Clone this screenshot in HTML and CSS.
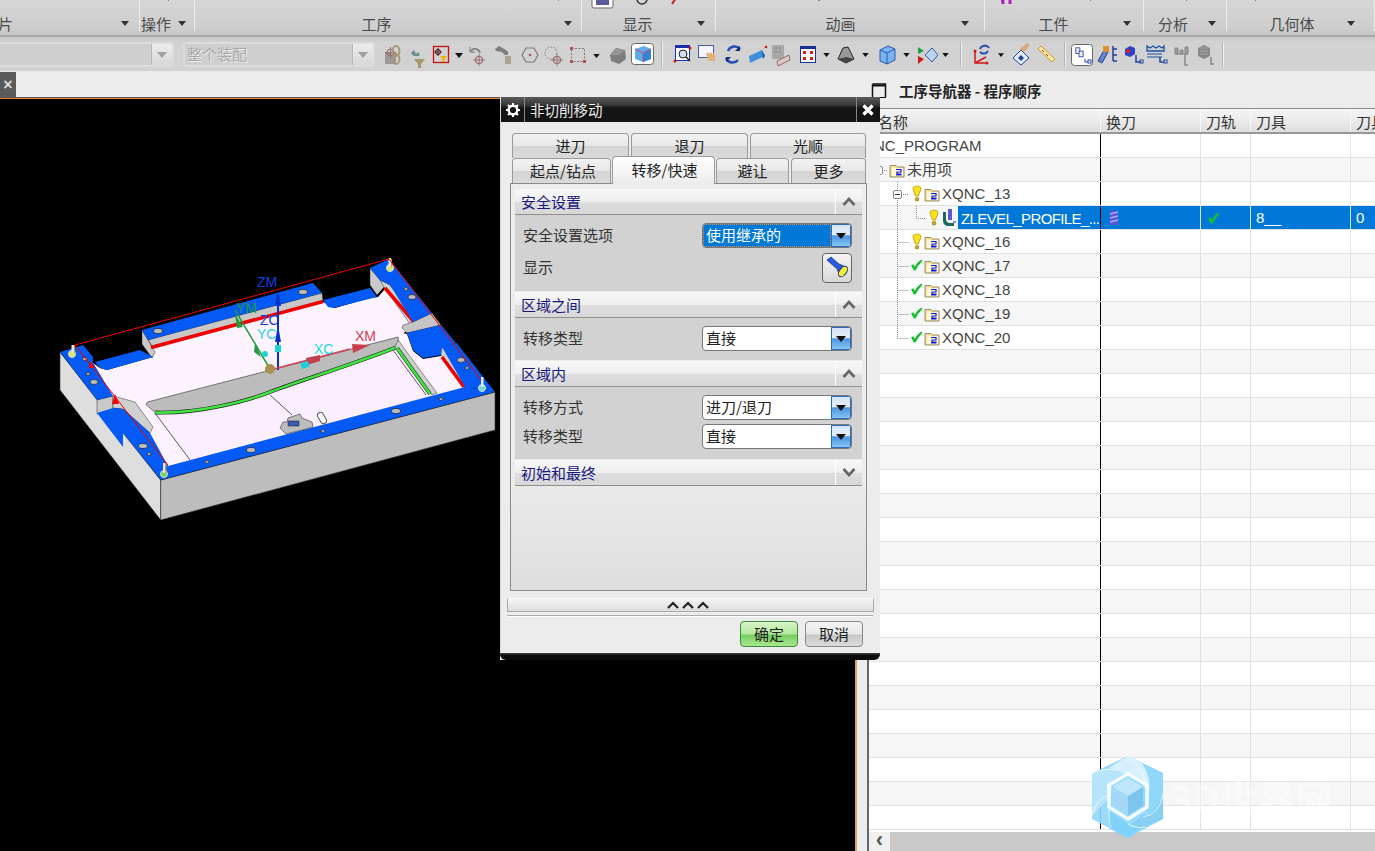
FILE: index.html
```html
<!DOCTYPE html>
<html lang="zh-CN">
<head>
<meta charset="utf-8">
<title>非切削移动</title>
<link rel="stylesheet" href="styles.css">
</head>
<body>
<svg class="defs" width="0" height="0">
  <symbol id="fold" viewBox="0 0 16 16">
    <path d="M1 3.500h6l1.500 1.500H15v10H1z" fill="#f7e39a" stroke="#8a8260" stroke-width=".9"/>
    <rect x="3" y="6" width="11" height="8" fill="#fdf8d4"/>
    <path d="M7 7.500h5v2.500H8v2h4.500M7 13h5.500" fill="none" stroke="#1616d8" stroke-width="1.200"/>
  </symbol>
  <symbol id="bulb" viewBox="0 0 10 17">
    <path d="M1 3C1 .5 9 .5 9 3c0 3-2 5-2.500 8h-3C3 8 1 6 1 3z" fill="#f9e21c" stroke="#b09a10" stroke-width=".8"/>
    <rect x="3.200" y="12.500" width="3.600" height="3.500" rx="1" fill="#caa616" stroke="#8a7a20" stroke-width=".5"/>
  </symbol>
  <symbol id="check" viewBox="0 0 13 12">
    <path d="M1 6.500l2.200-1.200 1.800 2.500C6.500 4.500 8.500 2 11.500 .8l1 1C9.800 4.500 7.500 7.800 5.600 11.500H4z" fill="#12c22e"/>
  </symbol>
  <symbol id="arrow" viewBox="0 0 8 5"><path d="M0 0h8L4 5z" fill="#111"/></symbol>
  <symbol id="tree" viewBox="0 0 16 16">
    <rect x="1" y="1" width="5" height="7" fill="#e8effa" stroke="#24409a"/>
    <rect x="5" y="5" width="5" height="7" fill="#e8effa" stroke="#24409a"/>
  </symbol>
  <symbol id="cross" viewBox="0 0 12 12">
    <circle cx="6" cy="6" r="3.500" fill="none" stroke="#9a6a70" stroke-width="1.200"/>
    <path d="M6 0v12M0 6h12" stroke="#9a6a70"/>
  </symbol>
</svg>

<div class="app">
  <header class="ribbon">
    <div class="rgroup g-a"><span class="rlabel rlabel-end">片</span><i class="rdrop"></i></div>
    <div class="rgroup g-b"><span class="rlabel">操作</span><i class="rdrop"></i></div>
    <div class="rgroup g-c"><span class="rlabel">工序</span><i class="rdrop"></i></div>
    <div class="rgroup g-d"><span class="rlabel">显示</span><i class="rdrop"></i></div>
    <div class="rgroup g-e"><span class="rlabel">动画</span><i class="rdrop"></i></div>
    <div class="rgroup g-f"><span class="rlabel">工件</span><i class="rdrop"></i></div>
    <div class="rgroup g-g"><span class="rlabel">分析</span><i class="rdrop"></i></div>
    <div class="rgroup g-h"><span class="rlabel">几何体</span><i class="rdrop"></i></div>
    <svg class="rcut" width="1375" height="10" viewBox="0 0 1375 10">
      <rect x="592" y="-8" width="21" height="16" rx="2" fill="#fff" stroke="#666"/>
      <rect x="596" y="-4" width="13" height="9" fill="#5a5a9a"/>
      <circle cx="642" cy="-1" r="5" fill="none" stroke="#333" stroke-width="1.500"/>
      <path d="M672 4l4-6" stroke="#d02020" stroke-width="2"/>
      <path d="M168 0h1M558 0h1M818 0h2" stroke="#333"/>
      <path d="M1003 0v4M1010 0v4" stroke="#b020c0" stroke-width="3"/>
      <path d="M1001 1h1M1090 0h1M1186 0h1M1255 0h1" stroke="#222"/>
    </svg>
  </header>

  <div class="toolbar">
    <div class="combo combo-a"><span class="combo-text"></span><i class="combo-btn"></i></div>
    <div class="combo combo-b"><span class="combo-text">整个装配</span><i class="combo-btn"></i></div>
    <div class="tools">
      <svg width="27" height="34"><rect x="5" y="16" width="11" height="11" fill="#9a9a9a"/><use href="#cross" x="5" y="10" width="11" height="11"/><ellipse cx="16" cy="14" rx="3.500" ry="5" fill="none" stroke="#a8987a" stroke-width="2"/><ellipse cx="16" cy="22" rx="3.500" ry="5" fill="none" stroke="#a8987a" stroke-width="2"/></svg>
      <svg width="23" height="34"><path d="M7 22h11l-4 5v4h-3v-4z" fill="#a8996a"/><path d="M4 16c2 4 6 4 9 2l-2-3-2 2-2-4z" fill="#6f8a92"/></svg>
      <svg width="22" height="34"><rect x="3.500" y="9.500" width="15" height="16" fill="none" stroke="#c81010" stroke-width="1.300"/><circle cx="8" cy="15" r="2.500" fill="none" stroke="#111"/><path d="M8 11v8M4.500 15h7" stroke="#6a0f0f"/><path d="M10 19h7l-2.500 3v3h-2v-3z" fill="#f2b400"/></svg>
      <svg width="15" height="34"><use href="#arrow" x="3" y="16" width="8" height="5"/></svg>
      <svg width="25" height="34"><path d="M4 14a5 5 0 0 1 9 2" fill="none" stroke="#777" stroke-width="1.500"/><path d="M3 10v5h5" fill="none" stroke="#777"/><use href="#cross" x="6" y="17" width="12" height="12"/></svg>
      <svg width="25" height="34"><path d="M3 12l4-3 7 4 2 2v3h-3l-3-3-6-1z" fill="#7d7d7d"/><rect x="13" y="19" width="6" height="8" fill="#a8a494"/></svg>
      <svg width="25" height="34"><path d="M9 11h8l4 7-4 7H9l-4-7z" fill="none" stroke="#7a7a7a" stroke-width="1.200"/><circle cx="13" cy="18" r="1.300" fill="#a05a5a"/></svg>
      <svg width="25" height="34"><circle cx="9" cy="16" r="6" fill="none" stroke="#777" stroke-dasharray="1.500 1.500"/><use href="#cross" x="9" y="17" width="12" height="12"/></svg>
      <svg width="23" height="34"><rect x="4.500" y="11.500" width="13" height="13" fill="none" stroke="#777" stroke-dasharray="2 1.500"/><path d="M3 10h3v3H3zM16 23h3v3h-3zM3 23h3v3H3z" fill="#b05050"/></svg>
      <svg width="17" height="34"><use href="#arrow" x="3" y="17" width="7" height="4"/></svg>
      <svg width="22" height="34"><path d="M3 18l6-7 9 2 1 9-7 5-8-3z" fill="#7d7d7d"/><path d="M9 11l9 2-6 5-9 0z" fill="#959595"/></svg>
      <svg class="tool-on" width="27" height="34"><rect x="2.500" y="6.500" width="22" height="21" rx="3" fill="#fff" stroke="#666"/><path d="M6 12l9-3 7 3v10l-8 3-8-3z" fill="#5aaef0"/><path d="M14 16l8-4v10l-8 3z" fill="#2e86d8"/><path d="M6 12l8 4 8-4M14 16v9" fill="none" stroke="#d04060"/></svg>
      <svg class="tsep" width="12" height="34"><path d="M6.500 5v25" stroke="#f0f0f0"/><path d="M5.500 5v25" stroke="#b4b4b4"/></svg>
      <svg width="27" height="34"><rect x="7.500" y="8.500" width="14" height="15" fill="#fff" stroke="#1a2fa8"/><rect x="7" y="8" width="15" height="3" fill="#1a2fa8"/><circle cx="15" cy="17" r="4" fill="#d0e0f0" stroke="#222"/><path d="M18 20l4 4" stroke="#222" stroke-width="1.500"/><circle cx="7" cy="24" r="1.500" fill="#d01010"/><circle cx="22" cy="11" r="1.500" fill="#d01010"/></svg>
      <svg width="24" height="34"><rect x="3.500" y="8.500" width="15" height="12" fill="#f4f4fa" stroke="#4a5aa8"/><path d="M11 17l2-2 1 2 2-2 1 2 2-1 1 3v5h-6z" fill="#e4b070"/></svg>
      <svg width="27" height="34"><path d="M9 14a7 7 0 0 1 12-2M19 23a7 7 0 0 1-12-2" fill="none" stroke="#2450b0" stroke-width="2.500"/><path d="M21 9v5h-5zM7 25v-5h5z" fill="#10307a"/></svg>
      <svg width="23" height="34"><path d="M3 19l13-6 3 6-15 7z" fill="#3f8fdc"/><path d="M16 13l3 6-2 3z" fill="#1f5fa8"/><circle cx="20" cy="10" r="1.300" fill="#d01010"/></svg>
      <svg width="27" height="34"><rect x="3" y="8" width="12" height="14" fill="#a8a8a8"/><path d="M6 11h2M10 11h2M6 15h2M10 15h2" stroke="#777"/><path d="M8 24l12-6 1 5-12 6z" fill="#d8c8c8" stroke="#966"/></svg>
      <svg width="23" height="34"><rect x="4.500" y="9.500" width="15" height="16" fill="#fff" stroke="#1a2f98"/><rect x="4" y="9" width="16" height="3" fill="#1a2f98"/><path d="M7 14h3v3H7zM14 14h3v3h-3zM7 20h3v3H7zM14 20h3v3h-3z" fill="#e01818"/></svg>
      <svg width="15" height="34"><use href="#arrow" x="4" y="16" width="7" height="4"/></svg>
      <svg width="24" height="34"><path d="M4 22l5-11 5-1 4 8 2 4-8 4z" fill="#999" stroke="#222"/><path d="M4 22l8-2 8 2-8 4z" fill="#444"/></svg>
      <svg width="16" height="34"><use href="#arrow" x="4" y="16" width="7" height="4"/></svg>
      <svg width="25" height="34"><path d="M6 13l8-4 7 3v11l-8 4-7-3z" fill="#7ab4f0" stroke="#2a5ab0"/><path d="M6 13l7 3 8-4M13 16v11" fill="none" stroke="#2a5ab0"/></svg>
      <svg width="15" height="34"><use href="#arrow" x="4" y="16" width="7" height="4"/></svg>
      <svg width="24" height="34"><path d="M11 18l7-7 6 7-6 7z" fill="#b8d4f0" stroke="#3a5a98"/><path d="M4 10l6 4-6 3z" fill="#20a040"/><path d="M4 19l6 3-6 5z" fill="#d01818"/></svg>
      <svg width="17" height="34"><use href="#arrow" x="4" y="16" width="7" height="4"/></svg>
      <svg class="tsep" width="12" height="34"><path d="M6.500 5v25" stroke="#f0f0f0"/><path d="M5.500 5v25" stroke="#b4b4b4"/></svg>
      <svg width="27" height="34"><path d="M8 14v12h12M8 26l11-6" fill="none" stroke="#d01818" stroke-width="1.500"/><circle cx="8" cy="14" r="1.500" fill="#d01818"/><circle cx="20" cy="26" r="1.500" fill="#d01818"/><path d="M13 12a5 5 0 0 1 9-1M21 14a5 5 0 0 1-8 1" fill="none" stroke="#2450b0" stroke-width="2"/></svg>
      <svg width="14" height="34"><use href="#arrow" x="4" y="16" width="6" height="4"/></svg>
      <svg width="26" height="34"><path d="M5 21l8-8 8 8-8 7z" fill="#e0ecff" stroke="#24409a"/><path d="M12 12l7-6 3 2-6 7z" fill="#d8a878"/><path d="M10 21l3-3 3 3-3 3z" fill="#24409a"/></svg>
      <svg width="25" height="34"><path d="M4 12l3-3 14 13-3 3z" fill="#f4e8a8" stroke="#c89a20"/><path d="M8 13l2 2M12 17l2 2" stroke="#d02020"/></svg>
      <svg class="tsep" width="10" height="34"><path d="M6.500 5v25" stroke="#f0f0f0"/><path d="M5.500 5v25" stroke="#b4b4b4"/></svg>
      <svg class="tool-on" width="26" height="34"><rect x="2.500" y="7.500" width="21" height="21" rx="3" fill="#fff" stroke="#666"/><use href="#tree" x="6" y="10" width="13" height="13"/><path d="M16 22v3h3" fill="none" stroke="#24409a"/><rect x="19" y="23" width="3" height="3" fill="none" stroke="#24409a"/></svg>
      <svg width="26" height="34"><path d="M3 24l6-11 4 2-6 11z" fill="#6a80c8" stroke="#24409a"/><rect x="8" y="9" width="6" height="6" fill="#e09030"/><path d="M18 9v15M18 12h4M18 18h4M18 24h4" fill="none" stroke="#24409a" stroke-width="1.500"/></svg>
      <svg width="23" height="34"><path d="M4 12l5-3 5 2v6l-5 3-5-2z" fill="#3040c8"/><circle cx="7" cy="14" r="2" fill="#e02020"/><path d="M15 18v7h5" fill="none" stroke="#24409a" stroke-width="1.500"/><rect x="19" y="23" width="3" height="3" fill="none" stroke="#24409a"/></svg>
      <svg width="27" height="34"><path d="M3 9l3 2 3-2 3 2 3-2 3 2 2-2v5H3z" fill="none" stroke="#1a50a8" stroke-width="1.300"/><path d="M3 17h15M3 20h15" stroke="#1a50a8"/><path d="M16 20v5h4" fill="none" stroke="#24409a" stroke-width="1.500"/><rect x="20" y="23" width="3" height="3" fill="none" stroke="#24409a"/></svg>
      <svg width="24" height="34"><path d="M4 11h3v6H4zM9 13h3v4H9zM14 10h3v7h-3zM4 17h13" fill="#989898" stroke="#888"/><path d="M14 17v11h3" fill="none" stroke="#888" stroke-width="1.500"/></svg>
      <svg width="24" height="34"><path d="M3 11l6-3 6 3v8l-6 3-6-3z" fill="#888"/><path d="M5 11h8M5 14h8M5 17h8" stroke="#a8a8a8"/><path d="M16 20v7h3" fill="none" stroke="#888" stroke-width="1.500"/></svg>
      <svg class="tsep" width="10" height="34"><path d="M4.500 5v25" stroke="#f0f0f0"/><path d="M3.500 5v25" stroke="#b4b4b4"/></svg>
    </div>
  </div>

  <div class="workspace">
    <section class="graphics">
      <div class="tabstrip"><span class="tabclose">×</span></div>
      <div class="viewport">
        <svg class="model" width="855" height="752" viewBox="0 99 855 752">
          <!-- side faces -->
          <path d="M60 352v38l100.700 130V480z" fill="#dedede" stroke="#333" stroke-width=".6"/>
          <path d="M160.700 480v40L495 430v-38z" fill="#bdbdbd" stroke="#333" stroke-width=".6"/>
          <!-- floor -->
          <path d="M93 363l7 5 7 2 46-13-1-10 171-45 12 6 35-10 8-1 7-8 30 35 18-3-30 12 4 1 6 17 10 8 18-3 2-8 22 40-297 79-18-33-15-31-22-6z" fill="#fdf3ff"/>
          <path d="M155 412.500C200 414 250 400 270 392S360 362 397 347L432 395 190 460z" fill="#fbeeff"/>
          <!-- back strip and walls -->
          <path d="M148 340l174-47 1 8-171 45z" fill="#c8c8c8" stroke="#333" stroke-width=".5"/>
          <path d="M142 330v14l10 14 3-6-7-12z" fill="#c9c9c9" stroke="#333" stroke-width=".5"/>
          <path d="M151 347.500l172-46" stroke="#f00000" stroke-width="3.500"/>
          <path d="M370 268v17l7 10 8-9-5-6z" fill="#c9c9c9" stroke="#333" stroke-width=".5"/>
          <path d="M380 280l10 5 26 34-6 5-26-37z" fill="#d2d2d2" stroke="#333" stroke-width=".5"/>
          <path d="M385 288l30 35" stroke="#f00000" stroke-width="3.500"/>
          <path d="M97 400l16-4v13l-16 5z" fill="#c9c9c9" stroke="#333" stroke-width=".5"/>
          <path d="M113 396l11 3 11 3 18 25-3 6-27-24-10-1z" fill="#d0d0d0" stroke="#333" stroke-width=".5"/>
          <path d="M413 322l19-9 9 12-34 8-5-5 1-3z" fill="#c4c4c4" stroke="#333" stroke-width=".5"/>
          <path d="M441 347v8l26 33 6-1-25-36z" fill="#d2d2d2" stroke="#333" stroke-width=".5"/>
          <path d="M442 357l22 30" stroke="#f00000" stroke-width="3.500"/>
          <!-- blue rim -->
          <path d="M60 352l23-7 10 12v6l20 33-16 4zM95 362l45-12 13 7-46 13-7-2zM142 330l171-47 9 10-174 47zM323 300l47-12 7 9-44 11-5-1zM370 268l19-9 43 54-19 9-23-37-10-5zM407 333l34-8 15 18-14 4-1 8-18 3-10-8zM442 347l15-4 38 49-30-5z" fill="#0559f4"/>
          <path d="M97 413l16-5 10 1 27 24 18 33 297-79 30 5-334 88-38-47v14z" fill="#0559f4"/>
          <path d="M60 352L97 400M123 433L160.700 480 495 392 389 259" fill="none" stroke="#222" stroke-width=".5"/>
          <!-- island -->
          <path d="M146 404.500l1.500-2.500 250.500-65 1 8-2 2C360 362 290 385 270 392S200 414 155 412.500z" fill="#bcbcbc" stroke="#333" stroke-width=".6"/>
          <path d="M155 412.500C200 414 250 400 270 392S360 362 397 347" fill="none" stroke="#222" stroke-width="3.800"/>
          <path d="M155 412.500C200 414 250 400 270 392S360 362 397 347" fill="none" stroke="#3fe63f" stroke-width="2.600"/>
          <path d="M398 340l39 53-5 2-37-48z" fill="#cfcfcf" stroke="#333" stroke-width=".5"/>
          <path d="M397 348l33 46" stroke="#222" stroke-width="3.800"/>
          <path d="M397 348l33 46" stroke="#3fe63f" stroke-width="2.600"/>
          <path d="M393 350l33 45M155 413l35 47M270 395l22 20" fill="none" stroke="#333" stroke-width=".8"/>
          <!-- small part -->
          <path d="M280 428l3-6 4 0 1-4 12-4 2 4 10 4 1 5-7 2-20 5z" fill="#bdbdbd" stroke="#333" stroke-width=".6"/>
          <rect x="288" y="421" width="11" height="5" fill="#3b5bb0" stroke="#222" stroke-width=".5"/>
          <rect x="319" y="412" width="6" height="12" rx="3" transform="rotate(-30 322 418)" fill="#fff" stroke="#555"/>
          <!-- holes -->
          <g fill="#bcbcbc" stroke="#222" stroke-width=".7">
            <ellipse cx="158" cy="331" rx="4.500" ry="2.500"/><ellipse cx="85" cy="359" rx="2.500" ry="1.700"/><ellipse cx="88" cy="374" rx="2" ry="1.400"/><ellipse cx="94" cy="382" rx="4" ry="2.500"/>
            <ellipse cx="143" cy="446" rx="4.500" ry="2.500"/><ellipse cx="149" cy="454" rx="2" ry="1.400"/><ellipse cx="251" cy="450" rx="4.500" ry="2.500"/><ellipse cx="207" cy="462" rx="2" ry="1.400"/>
            <ellipse cx="303" cy="292" rx="4.500" ry="2.500"/><ellipse cx="396" cy="411" rx="4.500" ry="2.500"/><ellipse cx="441" cy="399" rx="2" ry="1.400"/><ellipse cx="323" cy="431" rx="2" ry="1.400"/>
            <ellipse cx="406" cy="289" rx="2" ry="1.400"/><ellipse cx="412" cy="297" rx="4" ry="2.500"/><ellipse cx="461" cy="360" rx="4" ry="2.500"/><ellipse cx="467" cy="368" rx="2" ry="1.400"/>
          </g>
          <!-- pins -->
          <g>
            <circle cx="72" cy="354" r="3.500" fill="#d8e860" stroke="#ddd"/><rect x="71.500" y="345" width="2.500" height="8" fill="#e6e6e6"/><path d="M74.500 345v8" stroke="#e58a20"/>
            <circle cx="164" cy="474" r="3.500" fill="#70d860" stroke="#ddd"/><rect x="163" y="463" width="2.500" height="10" fill="#e6e6e6"/><path d="M166 463v10" stroke="#e58a20"/>
            <circle cx="390" cy="268" r="3.500" fill="#d8e860" stroke="#ddd"/><rect x="388.500" y="258" width="2.500" height="9" fill="#e6e6e6"/><path d="M391.500 259v8" stroke="#e58a20"/>
            <circle cx="482" cy="388" r="3.500" fill="#70d8c0" stroke="#ddd"/><rect x="481" y="377" width="2.500" height="10" fill="#e6e6e6"/>
          </g>
          <!-- red outline -->
          <path d="M75 345L389 259 481 380M75 345L168 465" fill="none" stroke="#f00000" stroke-width="1"/>
          <path d="M115 394l-3 10h7zM90 361l-1 7h6z" fill="#f00000"/>
          <!-- triad -->
          <path d="M278 295v75" stroke="#0a2fc8" stroke-width="2"/>
          <path d="M278 290l3 16h-6zM278 325l3 17h-6z" fill="#0a2fc8"/>
          <path d="M270 370l80-21" stroke="#d04050" stroke-width="1.500"/>
          <path d="M370 345l-18-1 1 9z" fill="#cc3b4a"/>
          <path d="M320 355l-14 3 1 7 13-4z" fill="#c04050"/>
          <rect x="301" y="362" width="8" height="6" transform="rotate(-15 305 365)" fill="#1ed0d8"/>
          <path d="M235 310l35 59" stroke="#1f9a3c" stroke-width="1.500"/>
          <path d="M235 314l8 13-6 1zM255 343l6 14-7-5z" fill="#1f9a3c"/>
          <circle cx="265" cy="354" r="3" fill="#1ed0d8"/>
          <rect x="275" y="345" width="6" height="7" fill="#1ed0d8"/>
          <circle cx="270" cy="369" r="5" fill="#a89050"/>
          <text class="ax ax-b" x="257" y="287">ZM</text>
          <text class="ax ax-b" x="260" y="325">ZC</text>
          <text class="ax ax-g" x="236" y="313">YM</text>
          <text class="ax ax-c" x="257" y="339">YC</text>
          <text class="ax ax-c" x="314" y="354">XC</text>
          <text class="ax ax-r" x="355" y="341">XM</text>
        </svg>
      </div>
    </section>

    <aside class="navigator">
      <div class="nav-title">
        <svg class="nav-win" width="16" height="16"><path d="M1.500 2h13v13M1.500 15V2" fill="none" stroke="#111" stroke-width="1.500"/><path d="M1 3.500h14" stroke="#111" stroke-width="2"/><path d="M1 15.500h14" stroke="#111"/></svg>
        <span>工序导航器 - 程序顺序</span>
      </div>
      <div class="grid-wrap">
        <div class="grid-head">
          <div class="hc hc-name"><span class="hc-name-text">名称</span></div>
          <div class="hc hc-2">换刀</div>
          <div class="hc hc-3">刀轨</div>
          <div class="hc hc-4">刀具</div>
          <div class="hc hc-5">刀具</div>
        </div>
        <div class="grid-body">
          <div class="row"><div class="c c1 l0">NC_PROGRAM</div><div class="c c2"></div><div class="c c3"></div><div class="c c4"></div><div class="c c5"></div></div>
          <div class="row"><div class="c c1 l1"><svg class="ic16" width="16" height="16"><use href="#fold"/></svg><span>未用项</span></div><div class="c c2"></div><div class="c c3"></div><div class="c c4"></div><div class="c c5"></div></div>
          <div class="row"><div class="c c1 l2"><svg class="st" width="15" height="18"><use href="#bulb" x="3" y="0" width="10" height="17"/></svg><svg class="ic16" width="16" height="16"><use href="#fold"/></svg><span>XQNC_13</span></div><div class="c c2"></div><div class="c c3"></div><div class="c c4"></div><div class="c c5"></div></div>
          <div class="row row-sel">
            <div class="c c1 l3">
              <svg class="st" width="14" height="18"><use href="#bulb" x="2" y="0" width="10" height="17"/></svg>
              <svg class="op" width="15" height="18"><path d="M2 3h3v7c0 3 2 4 5 4h3v3H8c-4 0-6-2-6-6z" fill="#1c6a5a"/><rect x="7" y="0" width="4" height="11" fill="#5a5ad8"/><path d="M12 13h3" stroke="#1616d8"/></svg>
              <span class="sel">ZLEVEL_PROFILE_...</span>
            </div>
            <div class="c c2"><svg class="tool" width="8" height="14"><rect width="8" height="14" fill="#5858d0"/><path d="M0 3l8-2M0 7l8-2M0 11l8-2" stroke="#b0a8f0" stroke-width="1.300"/></svg></div>
            <div class="c c3"><svg class="chk" width="13" height="12"><use href="#check"/></svg></div>
            <div class="c c4">8__</div>
            <div class="c c5">0</div>
          </div>
          <div class="row"><div class="c c1 l2"><svg class="st" width="15" height="18"><use href="#bulb" x="3" y="0" width="10" height="17"/></svg><svg class="ic16" width="16" height="16"><use href="#fold"/></svg><span>XQNC_16</span></div><div class="c c2"></div><div class="c c3"></div><div class="c c4"></div><div class="c c5"></div></div>
          <div class="row"><div class="c c1 l2"><svg class="st" width="15" height="18"><use href="#check" x="1" y="2" width="13" height="12"/></svg><svg class="ic16" width="16" height="16"><use href="#fold"/></svg><span>XQNC_17</span></div><div class="c c2"></div><div class="c c3"></div><div class="c c4"></div><div class="c c5"></div></div>
          <div class="row"><div class="c c1 l2"><svg class="st" width="15" height="18"><use href="#check" x="1" y="2" width="13" height="12"/></svg><svg class="ic16" width="16" height="16"><use href="#fold"/></svg><span>XQNC_18</span></div><div class="c c2"></div><div class="c c3"></div><div class="c c4"></div><div class="c c5"></div></div>
          <div class="row"><div class="c c1 l2"><svg class="st" width="15" height="18"><use href="#check" x="1" y="2" width="13" height="12"/></svg><svg class="ic16" width="16" height="16"><use href="#fold"/></svg><span>XQNC_19</span></div><div class="c c2"></div><div class="c c3"></div><div class="c c4"></div><div class="c c5"></div></div>
          <div class="row"><div class="c c1 l2"><svg class="st" width="15" height="18"><use href="#check" x="1" y="2" width="13" height="12"/></svg><svg class="ic16" width="16" height="16"><use href="#fold"/></svg><span>XQNC_20</span></div><div class="c c2"></div><div class="c c3"></div><div class="c c4"></div><div class="c c5"></div></div>
          <div class="row"><div class="c c1"></div><div class="c c2"></div><div class="c c3"></div><div class="c c4"></div><div class="c c5"></div></div>
          <div class="row"><div class="c c1"></div><div class="c c2"></div><div class="c c3"></div><div class="c c4"></div><div class="c c5"></div></div>
          <div class="row"><div class="c c1"></div><div class="c c2"></div><div class="c c3"></div><div class="c c4"></div><div class="c c5"></div></div>
          <div class="row"><div class="c c1"></div><div class="c c2"></div><div class="c c3"></div><div class="c c4"></div><div class="c c5"></div></div>
          <div class="row"><div class="c c1"></div><div class="c c2"></div><div class="c c3"></div><div class="c c4"></div><div class="c c5"></div></div>
          <div class="row"><div class="c c1"></div><div class="c c2"></div><div class="c c3"></div><div class="c c4"></div><div class="c c5"></div></div>
          <div class="row"><div class="c c1"></div><div class="c c2"></div><div class="c c3"></div><div class="c c4"></div><div class="c c5"></div></div>
          <div class="row"><div class="c c1"></div><div class="c c2"></div><div class="c c3"></div><div class="c c4"></div><div class="c c5"></div></div>
          <div class="row"><div class="c c1"></div><div class="c c2"></div><div class="c c3"></div><div class="c c4"></div><div class="c c5"></div></div>
          <div class="row"><div class="c c1"></div><div class="c c2"></div><div class="c c3"></div><div class="c c4"></div><div class="c c5"></div></div>
          <div class="row"><div class="c c1"></div><div class="c c2"></div><div class="c c3"></div><div class="c c4"></div><div class="c c5"></div></div>
          <div class="row"><div class="c c1"></div><div class="c c2"></div><div class="c c3"></div><div class="c c4"></div><div class="c c5"></div></div>
          <div class="row"><div class="c c1"></div><div class="c c2"></div><div class="c c3"></div><div class="c c4"></div><div class="c c5"></div></div>
          <div class="row"><div class="c c1"></div><div class="c c2"></div><div class="c c3"></div><div class="c c4"></div><div class="c c5"></div></div>
          <div class="row"><div class="c c1"></div><div class="c c2"></div><div class="c c3"></div><div class="c c4"></div><div class="c c5"></div></div>
          <div class="row"><div class="c c1"></div><div class="c c2"></div><div class="c c3"></div><div class="c c4"></div><div class="c c5"></div></div>
          <div class="row"><div class="c c1"></div><div class="c c2"></div><div class="c c3"></div><div class="c c4"></div><div class="c c5"></div></div>
          <div class="row"><div class="c c1"></div><div class="c c2"></div><div class="c c3"></div><div class="c c4"></div><div class="c c5"></div></div>
          <div class="row"><div class="c c1"></div><div class="c c2"></div><div class="c c3"></div><div class="c c4"></div><div class="c c5"></div></div>
          <div class="row"><div class="c c1"></div><div class="c c2"></div><div class="c c3"></div><div class="c c4"></div><div class="c c5"></div></div>
          <svg class="tree-lines" width="70" height="210" viewBox="869 134 70 210">
            <g fill="none" stroke="#8a8a8a" stroke-dasharray="1 1">
              <path d="M897.500 182v156.500M901 194.500h7M897.500 242.500h11M897.500 266.500h11M897.500 290.500h11M897.500 314.500h11M897.500 338.500h11M882 170.500h6M916.500 206v12.500h9"/>
            </g>
            <rect x="893.500" y="190.500" width="8" height="8" rx="1.500" fill="#fff" stroke="#8a8a8a"/>
            <path d="M895 194.500h5" stroke="#333"/>
            <rect x="874.500" y="166.500" width="8" height="8" rx="1.500" fill="#fff" stroke="#8a8a8a"/>
          </svg>
        </div>
        <div class="hscroll"><span class="hs-left">‹</span><span class="hs-track"></span></div>
      </div>
    </aside>
  </div>

  <div class="watermark">
    <svg width="74" height="84" viewBox="0 0 74 84">
      <path d="M37 1l35 17v46L37 83 1 64V18z" fill="#8fd6f9" opacity=".9"/>
      <path d="M37 1l14 7q10 14 7 30l-8-10-13-9-19-6z" fill="#d6f1fd"/>
      <path d="M1 18l17-5q12 1 19 6l-16 9-1 13q-9 9-19 20z" fill="#b6e5fb"/>
      <path d="M51 8l21 10v22q-5 13-14 19l-6-8V33l6 5q3-16-7-30z" fill="#8fd8f9"/>
      <path d="M72 40v24l-18 8q-8 1-14-3l12-9 6-1q9-6 14-19z" fill="#86cff2"/>
      <path d="M18 56l19 13q8 5 15 3l-15 11-19-10z" fill="#7fd3fb"/>
      <path d="M37 1q16 12 21 37M1 18q20-8 36 1M1 61q5-20 19-21M72 40q-4 20-20 22M18 55q0 14 2 18M37 69q8 5 17 3" fill="none" stroke="#fff" stroke-width=".8" opacity=".85"/>
      <path d="M37 19l19 11v22L37 64 18 52V30z" fill="none" stroke="#fff" stroke-width="3.500" opacity=".9"/>
      <path d="M37 23l15 9-15 9-16-9z" fill="#bfe7fb"/>
      <path d="M21 32l16 9v19l-16-9z" fill="#a4d8f6"/>
      <path d="M52 32l-15 9v19l15-9z" fill="#7cc6ee"/>
    </svg>
    <span class="wm-text">3D世界网</span>
  </div>

  <div class="dialog">
    <div class="dlg-title">
      <span class="dlg-gear"><svg width="16" height="16" viewBox="0 0 16 16"><circle cx="8" cy="8" r="4.300" fill="none" stroke="#fff" stroke-width="2.400"/><path d="M8 1v2.500M8 12.500V15M1 8h2.500M12.500 8H15M3 3l1.800 1.800M11.200 11.200L13 13M13 3l-1.800 1.800M4.800 11.200L3 13" stroke="#fff" stroke-width="2"/></svg></span>
      <span class="dlg-name">非切削移动</span>
      <span class="dlg-close"><svg width="14" height="14" viewBox="0 0 14 14"><path d="M2.500 2.500l9 9M11.500 2.500l-9 9" stroke="#fff" stroke-width="3.200"/></svg></span>
    </div>
    <div class="tabs">
      <div class="tabrow">
        <span class="tab t-a">进刀</span><span class="tab t-a">退刀</span><span class="tab t-b">光顺</span>
      </div>
      <div class="tabrow">
        <span class="tab t-c">起点/钻点</span><span class="tab t-d tab-on">转移/快速</span><span class="tab t-e">避让</span><span class="tab t-f">更多</span>
      </div>
    </div>
    <div class="panel">
      <div class="sec-h"><span>安全设置</span><i class="chev"><svg width="14" height="9" viewBox="0 0 14 9"><path d="M1.500 8L7 2l5.500 6" fill="none" stroke="#666" stroke-width="2.600"/></svg></i></div>
      <div class="sec-b sb-1">
        <div class="frow"><label>安全设置选项</label><div class="select is-focus"><span>使用继承的</span><i class="sel-btn"></i></div></div>
        <div class="frow frow-tall"><label>显示</label>
          <button class="light" type="button"><svg width="28" height="28" viewBox="0 0 28 28"><path d="M4 6l4-3 8 7 7 3-6 9-3-7z" fill="#2a5ae0" stroke="#10307a" stroke-width=".7"/><ellipse cx="20" cy="17.500" rx="3.500" ry="6" transform="rotate(35 20 17.500)" fill="#f4ec30" stroke="#10307a"/></svg></button>
        </div>
      </div>
      <div class="sec-h"><span>区域之间</span><i class="chev"><svg width="14" height="9" viewBox="0 0 14 9"><path d="M1.500 8L7 2l5.500 6" fill="none" stroke="#666" stroke-width="2.600"/></svg></i></div>
      <div class="sec-b sb-2">
        <div class="frow"><label>转移类型</label><div class="select"><span>直接</span><i class="sel-btn"></i></div></div>
      </div>
      <div class="sec-h"><span>区域内</span><i class="chev"><svg width="14" height="9" viewBox="0 0 14 9"><path d="M1.500 8L7 2l5.500 6" fill="none" stroke="#666" stroke-width="2.600"/></svg></i></div>
      <div class="sec-b sb-3">
        <div class="frow frow-a"><label>转移方式</label><div class="select"><span>进刀/退刀</span><i class="sel-btn"></i></div></div>
        <div class="frow"><label>转移类型</label><div class="select"><span>直接</span><i class="sel-btn"></i></div></div>
      </div>
      <div class="sec-h sec-last"><span>初始和最终</span><i class="chev"><svg width="14" height="9" viewBox="0 0 14 9"><path d="M1.500 1L7 7l5.500-6" fill="none" stroke="#666" stroke-width="2.600"/></svg></i></div>
    </div>
    <div class="collapse"><svg width="44" height="8" viewBox="0 0 44 8"><path d="M1 7l5-5 5 5M16 7l5-5 5 5M31 7l5-5 5 5" fill="none" stroke="#222" stroke-width="2.200"/></svg></div>
    <div class="dlg-rule"></div>
    <div class="dlg-actions">
      <button class="btn btn-ok" type="button">确定</button>
      <button class="btn" type="button">取消</button>
    </div>
    <div class="dlg-foot"></div>
  </div>
</div>
</body>
</html>
```

FILE: styles.css
```css
* { box-sizing: border-box; }
html, body { margin: 0; height: 100%; }
body {
  overflow: hidden;
  background: #ececec;
  font-family: "Noto Sans CJK SC", "Liberation Sans", sans-serif;
  font-size: 15px;
  color: #333;
}
.defs { position: absolute; }
.app { position: relative; width: 1375px; height: 851px; display: flex; flex-direction: column; overflow: hidden; }

/* ribbon */
.ribbon {
  position: relative;
  height: 37px;
  flex: none;
  display: flex;
  background: linear-gradient(#d6d6d6, #cecece 80%, #c6c6c6);
  border-bottom: 2px solid #a8a8a8;
}
.rgroup {
  position: relative;
  display: flex;
  justify-content: center;
  align-items: flex-end;
  height: 31px;
  border-right: 1px solid #ececec;
  flex: none;
}
.g-a { width: 140px; justify-content: flex-start; }
.g-b { width: 55px; justify-content: flex-start; padding-left: 1px; }
.g-c { width: 387px; padding-right: 23px; }
.g-d { width: 134px; padding-right: 22px; }
.g-e { width: 269px; padding-right: 19px; }
.g-f { width: 159px; padding-right: 21px; }
.g-g { width: 83px; padding-right: 24px; }
.g-h { width: 148px; padding-right: 17px; }
.rlabel { font-size: 15px; line-height: 20px; color: #4a4a4a; margin-bottom: -3px; }
.rlabel-end { margin-left: -2px; }
.rdrop {
  position: absolute;
  right: 8px;
  bottom: 5px;
  width: 0;
  height: 0;
  border: 4px solid transparent;
  border-top: 5px solid #333;
  border-bottom: 0;
}
.g-a .rdrop { right: 10px; }
.g-c .rdrop { right: 9px; }
.g-d .rdrop { right: 10px; }
.g-e .rdrop { right: 15px; }
.g-f .rdrop { right: 12px; }
.g-g .rdrop { right: 10px; }
.g-h .rdrop { right: 19px; }
.rcut { position: absolute; left: 0; top: 0; }

/* toolbar */
.toolbar {
  height: 35px;
  flex: none;
  display: flex;
  align-items: flex-start;
  background: linear-gradient(#c8c8c8, #d2d2d2 15%, #d2d2d2);
  border-bottom: 1px solid #e8e8e8;
}
.combo {
  display: flex;
  height: 25px;
  margin-top: 5px;
  border: 2px solid #dcdcdc;
  border-radius: 4px;
  background: #cfcfcf;
  flex: none;
}
.combo-a { width: 179px; margin-left: -5px; }
.combo-b { width: 192px; margin-left: 9px; margin-right: 5px; }
.combo-text { flex: 1; padding-left: 2px; font-size: 15px; line-height: 20px; color: #a8a8a8; text-shadow: 1px 1px 0 #eee; }
.combo-btn {
  position: relative;
  width: 21px;
  background: linear-gradient(#ececec, #d8d8d8);
  border-left: 1px solid #b8b8b8;
}
.combo-btn::after {
  content: "";
  position: absolute;
  left: 5px;
  top: 8px;
  border: 5px solid transparent;
  border-top: 6px solid #a0a0a0;
  border-bottom: 0;
}
.tools { display: flex; height: 34px; }
.tools svg { display: block; flex: none; }

/* workspace */
.workspace { flex: 1; min-height: 0; display: flex; }
.graphics { width: 857px; flex: none; display: flex; flex-direction: column; }
.tabstrip { height: 26px; flex: none; background: #ececec; border-bottom: 1px solid #555; }
.tabclose {
  display: block;
  width: 16px;
  height: 25px;
  background: #5a5a5a;
  color: #ddd;
  font: bold 16px/25px "Liberation Sans", sans-serif;
  text-align: center;
}
.viewport {
  flex: 1;
  min-height: 0;
  background: #000;
  border-top: 1px solid #e58a28;
  border-right: 2px solid #e0a060;
  overflow: hidden;
}
.model { display: block; }
.ax { font: 14px "Liberation Sans", sans-serif; }
.ax-b { fill: #1040e0; }
.ax-g { fill: #1f9a3c; }
.ax-c { fill: #22d8e0; }
.ax-r { fill: #d04050; }

/* navigator */
.navigator { flex: 1; min-width: 0; display: flex; flex-direction: column; background: #ececec; }
.nav-title {
  height: 37px;
  flex: none;
  display: flex;
  align-items: center;
  padding: 0 0 0 14px;
  border-bottom: 1px solid #8c8c8c;
  font-weight: 700;
  font-size: 14.500px;
  color: #222;
}
.nav-win { margin-right: 12px; }
.grid-wrap { flex: 1; min-height: 0; display: flex; flex-direction: column; margin-left: 10px; border-left: 2px solid #666; background: #fff; }
.grid-head {
  height: 25px;
  flex: none;
  display: flex;
  background: linear-gradient(#f4f4f4, #ececec 45%, #dedede);
  border-bottom: 2px solid #989898;
}
.hc { flex: none; padding: 0 0 0 5px; border-right: 1px solid #f8f8f8; line-height: 25px; color: #333; white-space: nowrap; overflow: hidden; }
.hc-name { width: 232px; padding-left: 9px; }
.hc-2 { width: 100px; }
.hc-3 { width: 50px; }
.hc-4 { width: 100px; }
.hc-5 { flex: 1; border-right: 0; }
.grid-body { position: relative; flex: 1; min-height: 0; overflow: hidden; }
.row { display: flex; height: 24px; border-bottom: 1px solid #e2e2e2; background: #fff; }
.row:nth-child(even) { background: #f6f6f6; }
.c {
  flex: none;
  display: flex;
  align-items: center;
  height: 23px;
  padding-top: 1px;
  border-right: 1px solid #e2e2e2;
  font: 15px/22px "Liberation Sans", "Noto Sans CJK SC", sans-serif;
  color: #444;
  white-space: nowrap;
}
.c1 { width: 232px; border-right: 1px solid #000; }
.c2 { width: 100px; }
.c3 { width: 50px; }
.c4 { width: 100px; padding-left: 5px; }
.c5 { flex: 1; border-right: 0; padding-left: 5px; }
.l0 { padding-left: 5px; }
.l1 { padding-left: 20px; }
.l2 { padding-left: 40px; }
.l3 { padding-left: 58px; }
.ic16 { flex: none; margin-right: 2px; display: block; }
.st, .op { flex: none; display: block; }
.sel { flex: 1; min-width: 0; height: 23px; margin-top: -1px; padding-left: 3px; margin-left: 2px; line-height: 25px; letter-spacing: -.6px; overflow: hidden; }
.row-sel .sel, .row-sel .c2, .row-sel .c3, .row-sel .c4, .row-sel .c5 { background: #0078d7; color: #fff; }
.tool { margin-left: 9px; }
.chk { margin-left: 6px; }
.tree-lines { position: absolute; left: 0; top: 0; }
.hscroll { height: 19px; flex: none; display: flex; background: #c9c9c9; }
.hs-left { width: 21px; flex: none; background: #f0f0f0; font: bold 22px/16px "Liberation Sans", sans-serif; color: #555; text-align: center; }
.hs-track { flex: 1; }

/* watermark */
.watermark { position: absolute; left: 1091px; top: 755px; display: flex; align-items: center; gap: 5px; pointer-events: none; }
.wm-text { font-size: 38px; font-weight: 700; line-height: 40px; color: rgba(255, 255, 255, .42); white-space: nowrap; }

/* dialog */
.dialog {
  position: absolute;
  left: 500px;
  top: 97px;
  width: 380px;
  height: 563px;
  display: flex;
  flex-direction: column;
  background: #ececec;
  border-left: 1px solid #d8d8d8;
  font-size: 15px;
}
.dlg-title {
  height: 25px;
  flex: none;
  display: flex;
  align-items: center;
  background: linear-gradient(#5a5a5a, #3a3a3a 30%, #141414 45%, #141414);
  color: #eee;
}
.dlg-gear { width: 24px; height: 25px; display: flex; align-items: center; justify-content: center; border-right: 1px solid #888; }
.dlg-gear svg { display: block; }
.dlg-name { flex: 1; padding-left: 5px; font-size: 14.500px; line-height: 25px; }
.dlg-close { width: 24px; height: 25px; display: flex; align-items: center; justify-content: center; border-left: 1px solid #888; padding-right: 2px; }
.tabs { margin: 11px 0 0 11px; flex: none; }
.tabrow { display: flex; height: 25px; }
.tab {
  display: block;
  height: 25px;
  border: 1px solid #9a9a9a;
  border-bottom: 0;
  border-radius: 4px 4px 0 0;
  background: linear-gradient(#f2f2f2, #e8e8e8 48%, #d4d4d4 52%, #dadada);
  text-align: center;
  line-height: 24px;
  color: #222;
  margin-right: 2px;
}
.t-a { width: 117px; }
.t-b { width: 116px; margin-right: 0; }
.t-c { width: 99px; margin-right: 1px; padding-left: 3px; }
.t-d { width: 103px; margin-right: 1px; padding-left: 2px; }
.t-e { width: 73px; }
.t-f { width: 75px; margin-right: 0; }
.tab-on { position: relative; z-index: 1; height: 28px; margin-top: -2px; background: linear-gradient(#ffffff, #ececec); line-height: 26px; border-bottom: 0; }
.panel {
  flex: none;
  height: 408px;
  margin-left: 9px;
  width: 357px;
  padding: 5px 4px 0;
  border: 1px solid #8a8a8a;
  background: linear-gradient(#ececec 70%, #dedede);
}
.sec-h {
  display: flex;
  justify-content: space-between;
  height: 26px;
  border-bottom: 1px solid #8f8f8f;
  background: linear-gradient(#f8f8f8, #eeeeee 50%, #dedede 52%, #d8d8d8);
  color: #18187c;
  line-height: 26px;
  padding-left: 6px;
}
.chev { width: 27px; border-left: 1px solid #fff; display: flex; align-items: center; justify-content: center; }
.chev svg { display: block; }
.sec-b { background: #d2d2d2; border-bottom: 1px solid #ececec; padding: 8px 10px 0 8px; }
.sb-1 { height: 77px; }
.sb-2 { height: 43px; }
.sb-3 { height: 73px; padding-top: 7px; }
.frow { display: flex; justify-content: space-between; align-items: center; height: 25px; }
.frow-a { height: 26px; margin-bottom: 4px; }
.frow-tall { margin-top: 5px; height: 30px; }
.frow label { color: #333; line-height: 25px; margin-top: -2px; }
.frow-tall label { margin-top: -3px; }
.select {
  display: flex;
  width: 150px;
  height: 25px;
  border: 1px solid #777;
  border-radius: 4px;
  background: #fff;
  overflow: hidden;
  line-height: 22px;
  color: #222;
}
.select span { flex: 1; padding-left: 3px; }
.is-focus span { background: #0078d7; color: #fff; outline: 1px dotted #e09040; outline-offset: -1px; }
.sel-btn {
  position: relative;
  width: 20px;
  flex: none;
  border: 1px solid #2a6cc0;
  background: linear-gradient(#d4e4f6, #e4eefa 45%, #4a96e4 52%, #86c4f2);
}
.sel-btn::after {
  content: "";
  position: absolute;
  left: 4px;
  top: 8px;
  border: 5px solid transparent;
  border-top: 6px solid #111;
  border-bottom: 0;
}
.light {
  width: 30px;
  height: 30px;
  padding: 0;
  border: 1px solid #666;
  border-radius: 4px;
  background: linear-gradient(#f4f4f4, #d8d8d8);
}
.light svg { display: block; }
.collapse {
  flex: none;
  height: 14px;
  width: 367px;
  margin: 7px 0 0 6px;
  display: flex;
  justify-content: center;
  align-items: center;
  border: 1px solid #aaa;
  border-top-color: #f8f8f8;
  background: linear-gradient(#f4f4f4, #dcdcdc);
}
.collapse svg { display: block; margin-left: -3px; }
.dlg-rule { height: 2px; width: 366px; margin: 3px 0 0 6px; border-top: 1px solid #aaa; border-bottom: 1px solid #fff; flex: none; }
.dlg-actions { flex: none; display: flex; justify-content: flex-end; gap: 7px; padding: 4px 17px 0 0; height: 32px; }
.btn {
  width: 58px;
  height: 26px;
  padding: 0;
  border: 1px solid #888;
  border-radius: 4px;
  background: linear-gradient(#f4f4f4, #e8e8e8 48%, #c8c8c8 55%, #dcdcdc);
  font: 15px/22px "Noto Sans CJK SC", sans-serif;
  color: #222;
}
.btn-ok { border-color: #3d8a3d; background: linear-gradient(#d8f4c8, #b6e8a0 48%, #78cf60 55%, #a8e890); }
.dlg-foot { flex: 1; margin: 4px 0 0 -1px; background: linear-gradient(#4a4a4a, #0a0a0a 30%); border-radius: 0 0 6px 6px; }
```
